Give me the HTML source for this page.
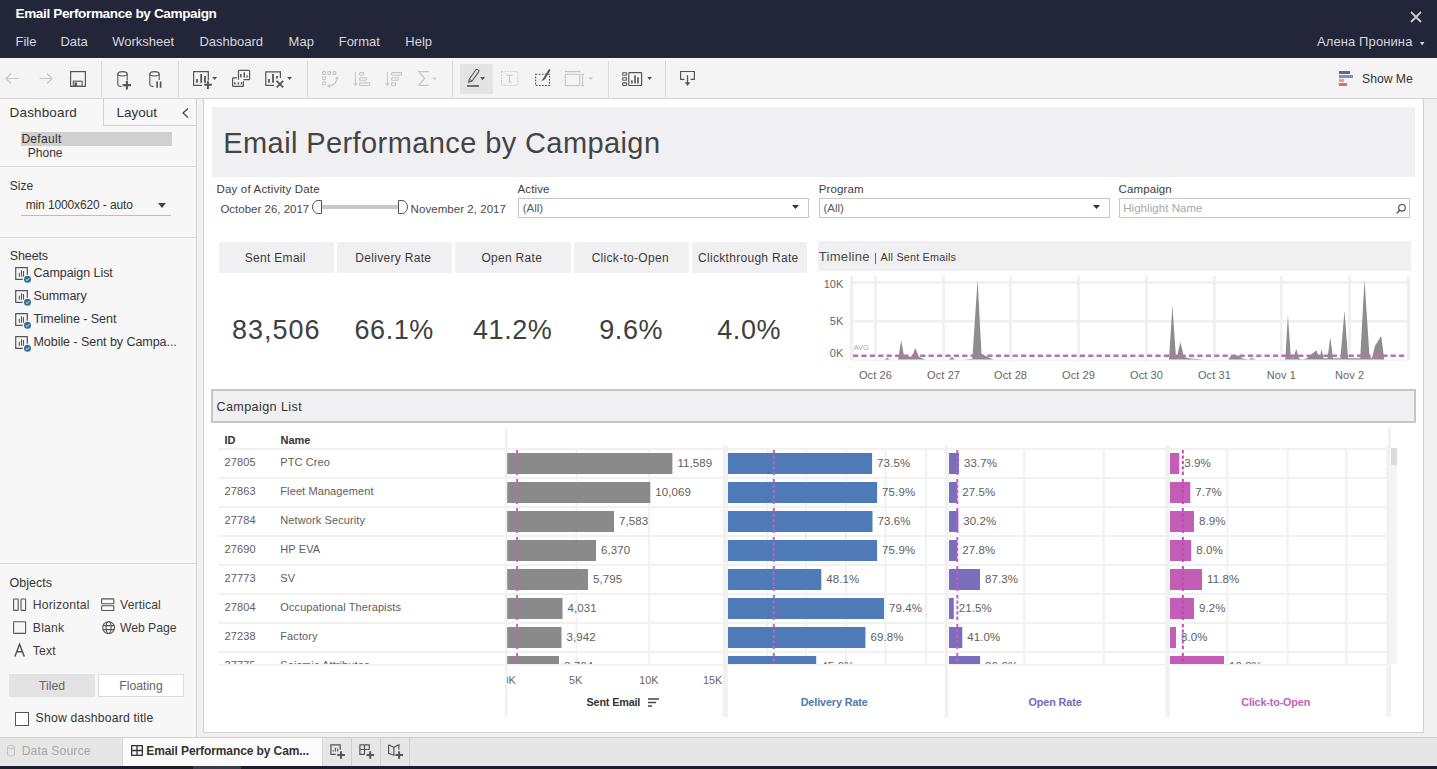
<!DOCTYPE html><html><head><meta charset="utf-8"><style>
html,body{margin:0;padding:0}
body{width:1437px;height:769px;position:relative;overflow:hidden;background:#f0f0f0;font-family:"Liberation Sans",sans-serif}
.t{position:absolute;white-space:nowrap}
.r{position:absolute}
svg.r{overflow:visible}
</style></head><body>
<div class="r" style="left:0px;top:0px;width:1437px;height:58px;background:#232538;"></div>
<div class="t" style="left:15.50px;top:7.39px;font-size:13.6px;line-height:13.6px;color:#ffffff;font-weight:700;letter-spacing:-0.39px;">Email Performance by Campaign</div>
<div class="t" style="left:15.50px;top:34.80px;font-size:13px;line-height:13px;color:#d6d7de;">File</div>
<div class="t" style="left:60.40px;top:34.80px;font-size:13px;line-height:13px;color:#d6d7de;">Data</div>
<div class="t" style="left:112.20px;top:34.80px;font-size:13px;line-height:13px;color:#d6d7de;">Worksheet</div>
<div class="t" style="left:199.40px;top:34.80px;font-size:13px;line-height:13px;color:#d6d7de;">Dashboard</div>
<div class="t" style="left:288.60px;top:34.80px;font-size:13px;line-height:13px;color:#d6d7de;">Map</div>
<div class="t" style="left:338.70px;top:34.80px;font-size:13px;line-height:13px;color:#d6d7de;">Format</div>
<div class="t" style="left:405.30px;top:34.80px;font-size:13px;line-height:13px;color:#d6d7de;">Help</div>
<div class="t" style="left:1317.00px;top:35.20px;font-size:13px;line-height:13px;color:#d6d7de;letter-spacing:0.1px;">Алена Пронина</div>
<svg class="r" style="left:1420px;top:41.5px;" width="5" height="4" viewBox="0 0 5 4"><path d="M0 0 L4.4 0 L2.2 3.6 Z" fill="#d6d7de"/></svg>
<svg class="r" style="left:1410px;top:11px;" width="12" height="12" viewBox="0 0 12 12"><path d="M1 1 L11 11 M11 1 L1 11" stroke="#c9cad2" stroke-width="1.8"/></svg>
<div class="r" style="left:0px;top:58px;width:1437px;height:40px;background:#f4f4f4;"></div>
<div class="r" style="left:0px;top:98px;width:1437px;height:1px;background:#d2d2d2;"></div>
<div class="r" style="left:101px;top:61px;width:1px;height:36px;background:#d8d8d8;"></div>
<div class="r" style="left:178px;top:61px;width:1px;height:36px;background:#d8d8d8;"></div>
<div class="r" style="left:307px;top:61px;width:1px;height:36px;background:#d8d8d8;"></div>
<div class="r" style="left:452px;top:61px;width:1px;height:36px;background:#d8d8d8;"></div>
<div class="r" style="left:608px;top:61px;width:1px;height:36px;background:#d8d8d8;"></div>
<div class="r" style="left:665px;top:61px;width:1px;height:36px;background:#d8d8d8;"></div>
<div class="r" style="left:460px;top:64px;width:33px;height:30px;background:#e4e4e4;"></div>
<svg class="r" style="left:0px;top:0px;" width="1437" height="98" viewBox="0 0 1437 98"><path d="M18.5 78.5 H6.5 M11 73.5 L6 78.5 L11 83.5" fill="none" stroke="#c6c6c6" stroke-width="1.1"/><path d="M39.5 78.5 H51.5 M47 73.5 L52 78.5 L47 83.5" fill="none" stroke="#c6c6c6" stroke-width="1.1"/><rect x="70.6" y="71.6" width="14.8" height="14.8" fill="none" stroke="#565656" stroke-width="1.2"/><rect x="73.3" y="81.2" width="8.8" height="5" fill="none" stroke="#565656" stroke-width="1.1"/><rect x="74.5" y="82.5" width="2.6" height="3.5" fill="#565656"/><ellipse cx="122.5" cy="73.8" rx="4.7" ry="2.2" fill="none" stroke="#565656" stroke-width="1.1"/><path d="M117.8 73.8 V84.5 Q118 86.2 121.5 86.6 M127.2 73.8 V80.5" fill="none" stroke="#565656" stroke-width="1.1"/><path d="M126.9 81 V89.4 M122.7 85.1 H131" stroke="#565656" stroke-width="2.1"/><ellipse cx="154.5" cy="73.8" rx="4.7" ry="2.2" fill="none" stroke="#565656" stroke-width="1.1"/><path d="M149.8 73.8 V84.5 Q150 86.2 153.5 86.6 M159.2 73.8 V80" fill="none" stroke="#565656" stroke-width="1.1"/><path d="M157.1 81.5 V87.7 M160.6 81.5 V87.7" stroke="#565656" stroke-width="1.7"/><g transform="translate(188,64)"><path d="M14 21.3 H5.6 V7.6 H20.3 V16.5" fill="none" stroke="#565656" stroke-width="1.2"/><path d="M9 18.8 V14.9 M13.2 18.8 V10 M17 18.8 V11.9" stroke="#565656" stroke-width="1.8"/><path d="M19.9 17.2 V24.9 M16.2 20.7 H23.9" stroke="#565656" stroke-width="2"/><path d="M24.1 13 H29.1 L26.6 16 Z" fill="#565656"/><path d="M50.5 15.7 V7.2 Q50.5 6.3 51.4 6.3 H60.7 Q61.6 6.3 61.6 7.2 V14.8 Q61.6 15.7 60.7 15.7 H55.5" fill="none" stroke="#565656" stroke-width="1.2"/><path d="M52.8 13.6 V10 M56.3 13.6 V8.3 M59 13.6 V11.5" stroke="#565656" stroke-width="1.5"/><path d="M49 13.8 H45.2 Q44.6 13.8 44.6 14.4 V21.8 Q44.6 22.4 45.2 22.4 H54.8 Q55.4 22.4 55.4 21.8 V17.2" fill="none" stroke="#565656" stroke-width="1.2"/><path d="M46.2 19.3 H47.6 M49.7 19.3 H51.1 M52.8 19.3 H54.2" stroke="#565656" stroke-width="2.2"/><path d="M86 21.3 H77.8 V7.9 H92.4 V14" fill="none" stroke="#565656" stroke-width="1.2"/><path d="M81 18.8 V14.9 M85 18.8 V10.1 M89 14.5 V12.1" stroke="#565656" stroke-width="1.8"/><path d="M88.6 16.8 L95.2 23.4 M95.2 16.8 L88.6 23.4" stroke="#565656" stroke-width="1.8"/><path d="M99.2 13 H104.1 L101.65 16 Z" fill="#565656"/></g><rect x="322.6" y="71.6" width="2.8" height="2.8" rx="0.5" fill="none" stroke="#c6c6c6" stroke-width="1.1"/><rect x="327.8" y="71.6" width="2.8" height="2.8" rx="0.5" fill="none" stroke="#c6c6c6" stroke-width="1.1"/><rect x="333" y="71.6" width="2.8" height="2.8" rx="0.5" fill="none" stroke="#c6c6c6" stroke-width="1.1"/><rect x="322.6" y="76.8" width="2.8" height="2.8" rx="0.5" fill="none" stroke="#c6c6c6" stroke-width="1.1"/><rect x="322.6" y="82" width="2.8" height="2.8" rx="0.5" fill="none" stroke="#c6c6c6" stroke-width="1.1"/><path d="M337 78.5 Q336 85 329 86.2" fill="none" stroke="#c6c6c6" stroke-width="1.2"/><path d="M335 78.8 L337.3 76.3 L339 79.3 Z M330 84 L327 86.3 L330 88.3 Z" fill="#c6c6c6"/><path d="M355.4 71.9 V84" stroke="#c6c6c6" stroke-width="1.1"/><path d="M353 83 H357.8 L355.4 86.2 Z" fill="#c6c6c6"/><rect x="359.6" y="72.6" width="4" height="2.6" rx="0.6" fill="none" stroke="#c6c6c6" stroke-width="1.1"/><rect x="359.6" y="77.7" width="6.8" height="2.6" rx="0.6" fill="none" stroke="#c6c6c6" stroke-width="1.1"/><rect x="359.6" y="82.9" width="10" height="2.6" rx="0.6" fill="none" stroke="#c6c6c6" stroke-width="1.1"/><path d="M387.3 71.9 V84" stroke="#c6c6c6" stroke-width="1.1"/><path d="M384.9 83 H389.7 L387.3 86.2 Z" fill="#c6c6c6"/><rect x="391.6" y="72.6" width="10" height="2.6" rx="0.6" fill="none" stroke="#c6c6c6" stroke-width="1.1"/><rect x="391.6" y="77.7" width="6.8" height="2.6" rx="0.6" fill="none" stroke="#c6c6c6" stroke-width="1.1"/><rect x="391.6" y="82.9" width="4" height="2.6" rx="0.6" fill="none" stroke="#c6c6c6" stroke-width="1.1"/><path d="M428.8 71.6 H418.8 L424.6 78.5 L418.8 85.4 H428.8" fill="none" stroke="#c6c6c6" stroke-width="1.3"/><path d="M432.6 77.5 H436.4 L434.5 79.9 Z" fill="#c6c6c6"/><path d="M468.6 82.2 L469.4 79 L476 69.8 Q476.8 69 477.8 69.6 L478.6 70.2 Q479.3 71 478.7 71.9 L472 81 Z" fill="none" stroke="#565656" stroke-width="1.1"/><path d="M469.4 79 L472 81" stroke="#565656" stroke-width="1"/><rect x="467.1" y="85.2" width="11.9" height="1.6" fill="#565656"/><path d="M480.2 76.9 H485 L482.6 80.2 Z" fill="#565656"/><rect x="501.5" y="71.6" width="16.3" height="13.8" fill="none" stroke="#c6c6c6" stroke-width="0.9" stroke-dasharray="1.6 1.2"/><path d="M506.6 75.3 H512.7 M509.65 75.3 V82 M508 82 H511.3" fill="none" stroke="#c6c6c6" stroke-width="1"/><rect x="535.6" y="74.3" width="14" height="11.2" fill="none" stroke="#565656" stroke-width="1.1" stroke-dasharray="1.8 1.3"/><path d="M549.3 70.2 L544.7 77.8" stroke="#565656" stroke-width="2" stroke-linecap="round"/><path d="M544.8 77 Q542.2 78.6 541.5 81.2 Q543.8 81 545.6 78.3 Z" fill="#565656"/><path d="M565.3 70.5 V72.5 M579.8 70.5 V72.5 M565.3 71.6 H579.8" fill="none" stroke="#c6c6c6" stroke-width="1.1"/><rect x="565.3" y="74.3" width="14.5" height="11.3" fill="none" stroke="#c6c6c6" stroke-width="1.1"/><path d="M582.6 74.2 V85.8 M581.2 74.3 H584 M581.2 85.6 H584" fill="none" stroke="#c6c6c6" stroke-width="1.1"/><path d="M588.4 77.2 H593 L590.7 80 Z" fill="#c6c6c6"/><g fill="none" stroke="#565656" stroke-width="1.1"><rect x="622.6" y="72.7" width="4" height="2.5" rx="0.6"/><rect x="622.6" y="77.7" width="4" height="2.5" rx="0.6"/><rect x="622.6" y="82.9" width="4" height="2.6" rx="0.6"/><rect x="628.8" y="72.6" width="12.8" height="12.9" rx="0.6" stroke-width="1.2"/></g><path d="M631.9 83.6 V80.2 M635 83.6 V75.2 M638 83.6 V77.2" stroke="#565656" stroke-width="1.6"/><path d="M647.2 77 H652.1 L649.65 80 Z" fill="#565656"/><path d="M684.5 79.3 H680.6 V71.5 H694.4 V79.3 H690.5" fill="none" stroke="#565656" stroke-width="1.2"/><path d="M687.5 75.2 V83" stroke="#565656" stroke-width="1.3"/><path d="M684.8 82.2 H690.3 L687.55 86 Z" fill="#565656"/></svg>
<svg class="r" style="left:1339px;top:71px;" width="14" height="15" viewBox="0 0 14 15"><rect x="0" y="0" width="11" height="3" fill="#6e6090"/><rect x="0" y="4" width="14" height="3" fill="#7497c2"/><rect x="0" y="8" width="5" height="3" fill="#eba46e"/><rect x="0" y="12" width="8" height="3" fill="#e5657a"/></svg>
<div class="t" style="left:1362.00px;top:72.97px;font-size:12.2px;line-height:12.2px;color:#333;">Show Me</div>
<div class="r" style="left:0px;top:99px;width:196px;height:638px;background:#f7f7f7;"></div>
<div class="r" style="left:196px;top:99px;width:1px;height:638px;background:#d2d2d2;"></div>
<div class="r" style="left:103px;top:99px;width:93px;height:27px;background:#f7f7f7;"></div>
<div class="r" style="left:103px;top:99px;width:1px;height:27px;background:#d2d2d2;"></div>
<div class="r" style="left:103px;top:125px;width:93px;height:1px;background:#d2d2d2;"></div>
<div class="t" style="left:9.60px;top:105.57px;font-size:13.5px;line-height:13.5px;color:#333;letter-spacing:0.15px;">Dashboard</div>
<div class="t" style="left:116.60px;top:105.57px;font-size:13.5px;line-height:13.5px;color:#333;letter-spacing:-0.05px;">Layout</div>
<svg class="r" style="left:182px;top:108px;" width="7" height="10" viewBox="0 0 7 10"><path d="M6 0.5 L1 5 L6 9.5" fill="none" stroke="#444" stroke-width="1.2"/></svg>
<div class="r" style="left:21px;top:132px;width:151px;height:14px;background:#d0d0d0;"></div>
<div class="t" style="left:21.40px;top:132.74px;font-size:12px;line-height:12px;color:#333;letter-spacing:0.3px;">Default</div>
<div class="t" style="left:27.80px;top:146.84px;font-size:12px;line-height:12px;color:#333;">Phone</div>
<div class="r" style="left:0px;top:166px;width:196px;height:1px;background:#dcdcdc;"></div>
<div class="t" style="left:9.80px;top:179.84px;font-size:12px;line-height:12px;color:#333;">Size</div>
<div class="t" style="left:25.70px;top:198.54px;font-size:12px;line-height:12px;color:#333;letter-spacing:-0.12px;">min 1000x620 - auto</div>
<svg class="r" style="left:158px;top:203px;" width="8" height="5" viewBox="0 0 8 5"><path d="M0 0 H8 L4 5 Z" fill="#444"/></svg>
<div class="r" style="left:21px;top:215px;width:150px;height:1px;background:#bdbdbd;"></div>
<div class="r" style="left:0px;top:237px;width:196px;height:1px;background:#dcdcdc;"></div>
<div class="t" style="left:9.70px;top:250.02px;font-size:12.5px;line-height:12.5px;color:#333;letter-spacing:-0.1px;">Sheets</div>
<svg class="r" style="left:0px;top:257px;" width="40" height="30" viewBox="0 0 40 30"><g transform="translate(0,-257)"><path d="M22.8 279.3 H15.7 V267.6 H27.3 V274.8" fill="none" stroke="#555" stroke-width="1.2"/><path d="M19.3 276.7 V272.8 M21.5 276.7 V270.3 M23.5 276.7 V271" stroke="#555" stroke-width="1.1"/><circle cx="27.5" cy="279.3" r="3.5" fill="#2f7096"/><path d="M25.8 279.4 L27.1 280.6 L29.3 278.2" fill="none" stroke="#e8f4fb" stroke-width="1"/></g></svg>
<div class="t" style="left:33.50px;top:267.32px;font-size:12.5px;line-height:12.5px;color:#333;letter-spacing:-0.05px;">Campaign List</div>
<svg class="r" style="left:0px;top:280px;" width="40" height="30" viewBox="0 0 40 30"><g transform="translate(0,-280)"><path d="M22.8 302.3 H15.7 V290.6 H27.3 V297.8" fill="none" stroke="#555" stroke-width="1.2"/><path d="M19.3 299.7 V295.8 M21.5 299.7 V293.3 M23.5 299.7 V294" stroke="#555" stroke-width="1.1"/><circle cx="27.5" cy="302.3" r="3.5" fill="#2f7096"/><path d="M25.8 302.4 L27.1 303.6 L29.3 301.2" fill="none" stroke="#e8f4fb" stroke-width="1"/></g></svg>
<div class="t" style="left:33.50px;top:290.32px;font-size:12.5px;line-height:12.5px;color:#333;letter-spacing:-0.05px;">Summary</div>
<svg class="r" style="left:0px;top:303px;" width="40" height="30" viewBox="0 0 40 30"><g transform="translate(0,-303)"><path d="M22.8 325.3 H15.7 V313.6 H27.3 V320.8" fill="none" stroke="#555" stroke-width="1.2"/><path d="M19.3 322.7 V318.8 M21.5 322.7 V316.3 M23.5 322.7 V317" stroke="#555" stroke-width="1.1"/><circle cx="27.5" cy="325.3" r="3.5" fill="#2f7096"/><path d="M25.8 325.4 L27.1 326.6 L29.3 324.2" fill="none" stroke="#e8f4fb" stroke-width="1"/></g></svg>
<div class="t" style="left:33.50px;top:313.32px;font-size:12.5px;line-height:12.5px;color:#333;letter-spacing:-0.05px;">Timeline - Sent</div>
<svg class="r" style="left:0px;top:326px;" width="40" height="30" viewBox="0 0 40 30"><g transform="translate(0,-326)"><path d="M22.8 348.3 H15.7 V336.6 H27.3 V343.8" fill="none" stroke="#555" stroke-width="1.2"/><path d="M19.3 345.7 V341.8 M21.5 345.7 V339.3 M23.5 345.7 V340" stroke="#555" stroke-width="1.1"/><circle cx="27.5" cy="348.3" r="3.5" fill="#2f7096"/><path d="M25.8 348.4 L27.1 349.6 L29.3 347.2" fill="none" stroke="#e8f4fb" stroke-width="1"/></g></svg>
<div class="t" style="left:33.50px;top:336.32px;font-size:12.5px;line-height:12.5px;color:#333;letter-spacing:-0.05px;">Mobile - Sent by Campa...</div>
<div class="r" style="left:0px;top:563px;width:196px;height:1px;background:#dcdcdc;"></div>
<div class="t" style="left:9.40px;top:577.42px;font-size:12.5px;line-height:12.5px;color:#333;letter-spacing:0.05px;">Objects</div>
<svg class="r" style="left:0px;top:0px;" width="200" height="769" viewBox="0 0 200 769"><g fill="none" stroke="#555" stroke-width="1.1"><rect x="13.6" y="599" width="4.6" height="11.4" rx="0.6"/><rect x="21" y="599" width="4.6" height="11.4" rx="0.6"/><rect x="101.6" y="598.9" width="12.2" height="4.8" rx="0.6"/><rect x="101.6" y="605.7" width="12.2" height="4.8" rx="0.6"/><rect x="13.6" y="621.8" width="12" height="11.6" rx="0.6"/><circle cx="108.6" cy="627.6" r="5.9"/><ellipse cx="108.6" cy="627.6" rx="2.5" ry="5.9"/><path d="M102.8 625.6 H114.4 M102.8 629.6 H114.4"/></g><path d="M14.9 656.4 L19.6 644.3 L24.3 656.4 M16.6 651.8 H22.6" fill="none" stroke="#555" stroke-width="1.5"/></svg>
<div class="t" style="left:32.80px;top:598.67px;font-size:12.2px;line-height:12.2px;color:#3d3d3d;letter-spacing:0.2px;">Horizontal</div>
<div class="t" style="left:120.10px;top:598.67px;font-size:12.2px;line-height:12.2px;color:#3d3d3d;letter-spacing:0.1px;">Vertical</div>
<div class="t" style="left:32.80px;top:621.57px;font-size:12.2px;line-height:12.2px;color:#3d3d3d;letter-spacing:0.2px;">Blank</div>
<div class="t" style="left:120.10px;top:621.57px;font-size:12.2px;line-height:12.2px;color:#3d3d3d;letter-spacing:-0.05px;">Web Page</div>
<div class="t" style="left:32.80px;top:644.67px;font-size:12.2px;line-height:12.2px;color:#3d3d3d;letter-spacing:0.2px;">Text</div>
<div class="r" style="left:9px;top:674px;width:86px;height:23px;background:#e3e3e3;"></div>
<div class="t" style="left:9.00px;top:679.67px;font-size:12.2px;line-height:12.2px;color:#666;width:86px;text-align:center;">Tiled</div>
<div class="r" style="left:98px;top:674px;width:86px;height:23px;background:#ffffff;border:1px solid #dcdcdc;box-sizing:border-box;"></div>
<div class="t" style="left:98.00px;top:679.67px;font-size:12.2px;line-height:12.2px;color:#666;width:86px;text-align:center;">Floating</div>
<svg class="r" style="left:15px;top:712px;" width="14" height="14" viewBox="0 0 14 14"><rect x="0.5" y="0.5" width="13" height="13" fill="#fff" stroke="#555"/></svg>
<div class="t" style="left:35.60px;top:712.47px;font-size:12.2px;line-height:12.2px;color:#333;letter-spacing:0.2px;">Show dashboard title</div>
<div class="r" style="left:0px;top:737px;width:1437px;height:29px;background:#e6e6e6;"></div>
<div class="r" style="left:0px;top:737px;width:1437px;height:1px;background:#d0d0d0;"></div>
<div class="r" style="left:0px;top:766px;width:1437px;height:3px;background:#1c1e2c;"></div>
<div class="r" style="left:193px;top:766px;width:48px;height:3px;background:#3a3d4c;"></div>
<svg class="r" style="left:7px;top:745px;" width="8" height="12" viewBox="0 0 8 12"><g fill="none" stroke="#c2c2c2"><ellipse cx="4" cy="2" rx="3.5" ry="1.6"/><path d="M0.5 2 V10 Q4 12.5 7.5 10 V2"/></g></svg>
<div class="t" style="left:21.70px;top:745.17px;font-size:12.2px;line-height:12.2px;color:#a8a8a8;letter-spacing:0.1px;">Data Source</div>
<div class="r" style="left:122px;top:738px;width:201px;height:28px;background:#fbfbfb;"></div>
<div class="r" style="left:122px;top:738px;width:1px;height:28px;background:#d8d8d8;"></div>
<div class="r" style="left:322px;top:738px;width:1px;height:28px;background:#d8d8d8;"></div>
<svg class="r" style="left:131px;top:745px;" width="12" height="11" viewBox="0 0 12 11"><g fill="none" stroke="#333" stroke-width="1.3"><rect x="0.65" y="0.65" width="10.7" height="9.7"/><path d="M6 0.6 V10.4 M0.6 5.5 H11.4"/></g></svg>
<div class="t" style="left:146.30px;top:744.74px;font-size:12px;line-height:12px;color:#333;font-weight:700;letter-spacing:-0.1px;">Email Performance by Cam...</div>
<div class="r" style="left:351px;top:738px;width:1px;height:28px;background:#d0d0d0;"></div>
<div class="r" style="left:380px;top:738px;width:1px;height:28px;background:#d0d0d0;"></div>
<div class="r" style="left:409px;top:738px;width:1px;height:28px;background:#d0d0d0;"></div>
<svg class="r" style="left:0px;top:700px;" width="500" height="69" viewBox="0 0 500 69"><g fill="none" stroke="#565656" stroke-width="1.2" transform="translate(0,-700)"><path d="M335.8 754.3 H330.9 V744.9 H340.2 V749.8"/><path d="M359.9 749.5 H369.2 M364.5 744.9 V754.3 M364.8 754.3 H359.9 V744.9 H369.2 V749.8"/><path d="M388.6 744.8 V753.4 L393.9 755.2 V747.4 L388.6 744.8 M393.9 747.4 L398.9 744.8 V749.8"/></g><g transform="translate(0,-700)"><path d="M333.2 751.6 V750 M335.4 751.6 V747.7 M337.7 751.6 V748.4" stroke="#565656" stroke-width="1.1"/><path d="M341 751.3 V758.8 M337.3 755 H344.9 M370.2 751.3 V758.8 M366.5 755 H374.1 M399.1 751.3 V758.8 M395.4 755 H403" stroke="#565656" stroke-width="2"/></g></svg>
<div class="r" style="left:197px;top:99px;width:6px;height:638px;background:#f2f2f2;"></div>
<div class="r" style="left:203px;top:98px;width:1221px;height:635px;background:#ffffff;border:1px solid #d0d0d0;box-sizing:border-box;"></div>
<div class="r" style="left:212px;top:107px;width:1203px;height:70px;background:#f0f0f2;"></div>
<div class="t" style="left:223.30px;top:129.05px;font-size:29px;line-height:29px;color:#444444;letter-spacing:0.4px;">Email Performance by Campaign</div>
<div class="t" style="left:216.50px;top:183.67px;font-size:11.5px;line-height:11.5px;color:#3d3d3d;letter-spacing:0.18px;">Day of Activity Date</div>
<div class="t" style="left:220.40px;top:203.97px;font-size:11.5px;line-height:11.5px;color:#4a4a4a;">October 26, 2017</div>
<div class="r" style="left:322px;top:204.8px;width:76px;height:3.8px;background:#c8c8c8;"></div>
<svg class="r" style="left:312px;top:200px;" width="10" height="14" viewBox="0 0 10 14"><path d="M9.5 0.5 H6 A5.5 6.5 0 0 0 6 13.5 H9.5 Z" fill="#fff" stroke="#555"/></svg>
<svg class="r" style="left:398px;top:200px;" width="10" height="14" viewBox="0 0 10 14"><path d="M0.5 0.5 H4 A5.5 6.5 0 0 1 4 13.5 H0.5 Z" fill="#fff" stroke="#555"/></svg>
<div class="t" style="left:410.60px;top:203.97px;font-size:11.5px;line-height:11.5px;color:#4a4a4a;letter-spacing:0.05px;">November 2, 2017</div>
<div class="t" style="left:517.60px;top:183.67px;font-size:11.5px;line-height:11.5px;color:#3d3d3d;letter-spacing:0.1px;">Active</div>
<div class="r" style="left:518px;top:198px;width:291px;height:20px;background:#fff;border:1px solid #c6c6c6;box-sizing:border-box;"></div>
<div class="t" style="left:522.70px;top:202.77px;font-size:11.5px;line-height:11.5px;color:#5a5a5a;">(All)</div>
<svg class="r" style="left:792px;top:205px;" width="7" height="4" viewBox="0 0 7 4"><path d="M0 0 H7 L3.5 4 Z" fill="#333"/></svg>
<div class="t" style="left:818.80px;top:183.67px;font-size:11.5px;line-height:11.5px;color:#3d3d3d;letter-spacing:0.1px;">Program</div>
<div class="r" style="left:819px;top:198px;width:291px;height:20px;background:#fff;border:1px solid #c6c6c6;box-sizing:border-box;"></div>
<div class="t" style="left:823.50px;top:202.77px;font-size:11.5px;line-height:11.5px;color:#5a5a5a;">(All)</div>
<svg class="r" style="left:1093px;top:205px;" width="7" height="4" viewBox="0 0 7 4"><path d="M0 0 H7 L3.5 4 Z" fill="#333"/></svg>
<div class="t" style="left:1118.60px;top:183.67px;font-size:11.5px;line-height:11.5px;color:#3d3d3d;letter-spacing:0.1px;">Campaign</div>
<div class="r" style="left:1119px;top:198px;width:291px;height:20px;background:#fff;border:1px solid #c6c6c6;box-sizing:border-box;"></div>
<div class="t" style="left:1123.20px;top:202.77px;font-size:11.5px;line-height:11.5px;color:#a8a8a8;letter-spacing:0.05px;">Highlight Name</div>
<svg class="r" style="left:1396px;top:204px;" width="10" height="10" viewBox="0 0 10 10"><circle cx="6" cy="3.8" r="3.3" fill="none" stroke="#444" stroke-width="1.1"/><path d="M3.7 6.2 L0.6 9.4" stroke="#444" stroke-width="1.3"/></svg>
<div class="r" style="left:219px;top:242px;width:115px;height:31px;background:#f0f0f2;"></div>
<div class="t" style="left:175.30px;top:251.94px;font-size:12px;line-height:12px;color:#3a3a3a;letter-spacing:0.3px;width:200px;text-align:center;">Sent Email</div>
<div class="t" style="left:176.20px;top:317.34px;font-size:27px;line-height:27px;color:#404040;letter-spacing:1.0px;width:200px;text-align:center;">83,506</div>
<div class="r" style="left:337px;top:242px;width:115px;height:31px;background:#f0f0f2;"></div>
<div class="t" style="left:293.30px;top:251.94px;font-size:12px;line-height:12px;color:#3a3a3a;letter-spacing:0.3px;width:200px;text-align:center;">Delivery Rate</div>
<div class="t" style="left:294.20px;top:317.34px;font-size:27px;line-height:27px;color:#404040;letter-spacing:0.6px;width:200px;text-align:center;">66.1%</div>
<div class="r" style="left:455px;top:242px;width:116px;height:31px;background:#f0f0f2;"></div>
<div class="t" style="left:411.80px;top:251.94px;font-size:12px;line-height:12px;color:#3a3a3a;letter-spacing:0.3px;width:200px;text-align:center;">Open Rate</div>
<div class="t" style="left:412.70px;top:317.34px;font-size:27px;line-height:27px;color:#404040;letter-spacing:0.6px;width:200px;text-align:center;">41.2%</div>
<div class="r" style="left:574px;top:242px;width:115px;height:31px;background:#f0f0f2;"></div>
<div class="t" style="left:530.30px;top:251.94px;font-size:12px;line-height:12px;color:#3a3a3a;letter-spacing:0.3px;width:200px;text-align:center;">Click-to-Open</div>
<div class="t" style="left:531.20px;top:317.34px;font-size:27px;line-height:27px;color:#404040;letter-spacing:0.6px;width:200px;text-align:center;">9.6%</div>
<div class="r" style="left:692px;top:242px;width:115px;height:31px;background:#f0f0f2;"></div>
<div class="t" style="left:648.30px;top:251.94px;font-size:12px;line-height:12px;color:#3a3a3a;letter-spacing:0.3px;width:200px;text-align:center;">Clickthrough Rate</div>
<div class="t" style="left:649.20px;top:317.34px;font-size:27px;line-height:27px;color:#404040;letter-spacing:0.6px;width:200px;text-align:center;">4.0%</div>
<div class="r" style="left:818px;top:241px;width:593px;height:30px;background:#f0f0f2;"></div>
<div class="t" style="left:818.80px;top:250.40px;font-size:13px;line-height:13px;color:#4a4a4a;letter-spacing:0.3px;">Timeline</div>
<div class="r" style="left:874.8px;top:252.5px;width:1px;height:11px;background:#666;"></div>
<div class="t" style="left:880.60px;top:251.86px;font-size:10.8px;line-height:10.8px;color:#3a3a3a;letter-spacing:0.2px;">All Sent Emails</div>
<svg class="r" style="left:0px;top:0px;pointer-events:none" width="1437" height="769" viewBox="0 0 1437 769"><rect x="850" y="276" width="3" height="84" fill="#efefef"/><rect x="1407" y="276" width="3" height="84" fill="#efefef"/><rect x="874.15" y="276" width="2.5" height="86" fill="#efefef"/><rect x="942.35" y="276" width="2.5" height="86" fill="#efefef"/><rect x="1009.35" y="276" width="2.5" height="86" fill="#efefef"/><rect x="1077.25" y="276" width="2.5" height="86" fill="#efefef"/><rect x="1145.25" y="276" width="2.5" height="86" fill="#efefef"/><rect x="1213.15" y="276" width="2.5" height="86" fill="#efefef"/><rect x="1280.15" y="276" width="2.5" height="86" fill="#efefef"/><rect x="1348.35" y="276" width="2.5" height="86" fill="#efefef"/><rect x="853" y="281.15" width="554" height="2.5" fill="#efefef"/><rect x="853" y="320.05" width="554" height="2.5" fill="#efefef"/><rect x="853" y="359.5" width="554" height="1.5" fill="#f3f3f3"/><path d="M853.0 359.6 L884.5 359.6 L887.6 357.7 L889.7 359.6 L898.1 359.6 L901.2 340.2 L904.1 356.5 L912.3 356.5 L915.2 348.1 L919.1 357.0 L925.3 359.6 L948.8 359.6 L951.9 357.1 L955.0 359.6 L963.6 359.6 L972.3 358.8 L977.6 280.1 L981.5 354.0 L993.3 359.6 L1169.0 359.6 L1172.4 305.2 L1175.8 355.0 L1177.0 356.0 L1180.5 342.0 L1183.9 357.0 L1190.7 358.5 L1204.0 359.6 L1228.3 359.6 L1231.4 355.2 L1235.0 356.2 L1238.2 355.2 L1242.5 358.4 L1248.7 359.6 L1251.2 358.0 L1255.5 359.6 L1284.8 359.6 L1285.4 358.0 L1287.9 315.1 L1290.8 356.5 L1293.5 357.7 L1296.3 349.1 L1299.0 358.3 L1302.1 359.6 L1307.0 358.3 L1316.3 350.3 L1318.8 356.5 L1320.0 356.5 L1321.6 349.1 L1323.7 358.3 L1327.5 358.3 L1330.3 337.3 L1333.0 358.3 L1340.4 358.3 L1344.5 310.8 L1348.1 358.3 L1360.2 358.3 L1364.5 280.1 L1369.5 356.5 L1372.0 358.3 L1375.0 345.9 L1381.2 336.1 L1384.3 359.6 L1407.0 359.6 Z" fill="#8d8d8d"/><line x1="853" y1="355.8" x2="1407" y2="355.8" stroke="#b472b4" stroke-width="2.6" stroke-dasharray="5.2 3.2"/></svg>
<div class="t" style="left:853.40px;top:344.47px;font-size:7.6px;line-height:7.6px;color:#cc90cc;">AVG</div>
<div class="t" style="left:803.50px;top:279.19px;font-size:11px;line-height:11px;color:#666;letter-spacing:0.1px;width:40px;text-align:right;">10K</div>
<div class="t" style="left:803.50px;top:316.49px;font-size:11px;line-height:11px;color:#666;letter-spacing:0.1px;width:40px;text-align:right;">5K</div>
<div class="t" style="left:803.50px;top:347.69px;font-size:11px;line-height:11px;color:#666;letter-spacing:0.1px;width:40px;text-align:right;">0K</div>
<div class="t" style="left:835.40px;top:369.59px;font-size:11px;line-height:11px;color:#666;letter-spacing:0.1px;width:80px;text-align:center;">Oct 26</div>
<div class="t" style="left:903.60px;top:369.59px;font-size:11px;line-height:11px;color:#666;letter-spacing:0.1px;width:80px;text-align:center;">Oct 27</div>
<div class="t" style="left:970.60px;top:369.59px;font-size:11px;line-height:11px;color:#666;letter-spacing:0.1px;width:80px;text-align:center;">Oct 28</div>
<div class="t" style="left:1038.50px;top:369.59px;font-size:11px;line-height:11px;color:#666;letter-spacing:0.1px;width:80px;text-align:center;">Oct 29</div>
<div class="t" style="left:1106.50px;top:369.59px;font-size:11px;line-height:11px;color:#666;letter-spacing:0.1px;width:80px;text-align:center;">Oct 30</div>
<div class="t" style="left:1174.40px;top:369.59px;font-size:11px;line-height:11px;color:#666;letter-spacing:0.1px;width:80px;text-align:center;">Oct 31</div>
<div class="t" style="left:1241.40px;top:369.59px;font-size:11px;line-height:11px;color:#666;letter-spacing:0.1px;width:80px;text-align:center;">Nov 1</div>
<div class="t" style="left:1309.60px;top:369.59px;font-size:11px;line-height:11px;color:#666;letter-spacing:0.1px;width:80px;text-align:center;">Nov 2</div>
<div class="r" style="left:211px;top:389px;width:1205px;height:34px;background:#f0f0f2;border:2px solid #c6c6c6;box-sizing:border-box;"></div>
<div class="t" style="left:216.40px;top:400.53px;font-size:12.6px;line-height:12.6px;color:#333;letter-spacing:0.4px;">Campaign List</div>
<div class="t" style="left:224.50px;top:434.89px;font-size:11px;line-height:11px;color:#333;font-weight:700;">ID</div>
<div class="t" style="left:280.60px;top:434.89px;font-size:11px;line-height:11px;color:#333;font-weight:700;letter-spacing:-0.1px;">Name</div>
<svg class="r" style="left:0px;top:0px;pointer-events:none" width="1437" height="769" viewBox="0 0 1437 769"><rect x="505" y="428" width="2.4" height="289" fill="#f1f1f1"/><rect x="722.8" y="445" width="5" height="272" fill="#f1f1f1"/><rect x="944.8" y="445" width="3.4" height="272" fill="#f1f1f1"/><rect x="1165.5" y="445" width="4.5" height="272" fill="#f1f1f1"/><rect x="1386.3" y="445" width="2.8" height="272" fill="#f1f1f1"/><rect x="1388" y="428" width="3" height="289" fill="#f1f1f1"/><rect x="218" y="448" width="1168" height="2" fill="#f1f1f1"/><rect x="218" y="477" width="1168" height="2" fill="#f1f1f1"/><rect x="218" y="506" width="1168" height="2" fill="#f1f1f1"/><rect x="218" y="535" width="1168" height="2" fill="#f1f1f1"/><rect x="218" y="564" width="1168" height="2" fill="#f1f1f1"/><rect x="218" y="593" width="1168" height="2" fill="#f1f1f1"/><rect x="218" y="622" width="1168" height="2" fill="#f1f1f1"/><rect x="218" y="651" width="1168" height="2" fill="#f1f1f1"/><rect x="218" y="664" width="1168" height="1.5" fill="#f1f1f1"/><rect x="575.5" y="448" width="2" height="216" fill="#f1f1f1"/><rect x="648.2" y="448" width="2" height="216" fill="#f1f1f1"/><rect x="766" y="448" width="2" height="216" fill="#f1f1f1"/><rect x="805" y="448" width="2" height="216" fill="#f1f1f1"/><rect x="845" y="448" width="2" height="216" fill="#f1f1f1"/><rect x="884.5" y="448" width="2" height="216" fill="#f1f1f1"/><rect x="925" y="448" width="2" height="216" fill="#f1f1f1"/><rect x="1023.2" y="448" width="2" height="216" fill="#f1f1f1"/><rect x="1102.8" y="448" width="2" height="216" fill="#f1f1f1"/><rect x="1226.3" y="448" width="2" height="216" fill="#f1f1f1"/><rect x="1286.6" y="448" width="2" height="216" fill="#f1f1f1"/><rect x="1345.6" y="448" width="2" height="216" fill="#f1f1f1"/></svg>
<div class="r" style="left:0;top:448px;width:1437px;height:216px;overflow:hidden">
<div class="t" style="left:224.4px;top:8.69px;font-size:11px;line-height:11px;color:#5e5e5e;letter-spacing:0.15px">27805</div>
<div class="t" style="left:280.3px;top:8.69px;font-size:11px;line-height:11px;color:#5e5e5e;letter-spacing:0.1px">PTC Creo</div>
<div class="t" style="left:677.4px;top:9.77px;font-size:11.5px;line-height:11.5px;color:#5e5e5e;letter-spacing:0.1px">11,589</div>
<div class="t" style="left:877.1px;top:9.77px;font-size:11.5px;line-height:11.5px;color:#5e5e5e;letter-spacing:0.1px">73.5%</div>
<div class="t" style="left:964.0px;top:9.77px;font-size:11.5px;line-height:11.5px;color:#5e5e5e;letter-spacing:0.1px">33.7%</div>
<div class="t" style="left:1184.3px;top:9.77px;font-size:11.5px;line-height:11.5px;color:#5e5e5e;letter-spacing:0.1px">3.9%</div>
<div class="t" style="left:224.4px;top:37.69px;font-size:11px;line-height:11px;color:#5e5e5e;letter-spacing:0.15px">27863</div>
<div class="t" style="left:280.3px;top:37.69px;font-size:11px;line-height:11px;color:#5e5e5e;letter-spacing:0.1px">Fleet Management</div>
<div class="t" style="left:655.3px;top:38.77px;font-size:11.5px;line-height:11.5px;color:#5e5e5e;letter-spacing:0.1px">10,069</div>
<div class="t" style="left:882.1px;top:38.77px;font-size:11.5px;line-height:11.5px;color:#5e5e5e;letter-spacing:0.1px">75.9%</div>
<div class="t" style="left:962.3px;top:38.77px;font-size:11.5px;line-height:11.5px;color:#5e5e5e;letter-spacing:0.1px">27.5%</div>
<div class="t" style="left:1195.3px;top:38.77px;font-size:11.5px;line-height:11.5px;color:#5e5e5e;letter-spacing:0.1px">7.7%</div>
<div class="t" style="left:224.4px;top:66.69px;font-size:11px;line-height:11px;color:#5e5e5e;letter-spacing:0.15px">27784</div>
<div class="t" style="left:280.3px;top:66.69px;font-size:11px;line-height:11px;color:#5e5e5e;letter-spacing:0.1px">Network Security</div>
<div class="t" style="left:619.0px;top:67.77px;font-size:11.5px;line-height:11.5px;color:#5e5e5e;letter-spacing:0.1px">7,583</div>
<div class="t" style="left:877.5px;top:67.77px;font-size:11.5px;line-height:11.5px;color:#5e5e5e;letter-spacing:0.1px">73.6%</div>
<div class="t" style="left:963.3px;top:67.77px;font-size:11.5px;line-height:11.5px;color:#5e5e5e;letter-spacing:0.1px">30.2%</div>
<div class="t" style="left:1199.0px;top:67.77px;font-size:11.5px;line-height:11.5px;color:#5e5e5e;letter-spacing:0.1px">8.9%</div>
<div class="t" style="left:224.4px;top:95.69px;font-size:11px;line-height:11px;color:#5e5e5e;letter-spacing:0.15px">27690</div>
<div class="t" style="left:280.3px;top:95.69px;font-size:11px;line-height:11px;color:#5e5e5e;letter-spacing:0.1px">HP EVA</div>
<div class="t" style="left:601.0px;top:96.77px;font-size:11.5px;line-height:11.5px;color:#5e5e5e;letter-spacing:0.1px">6,370</div>
<div class="t" style="left:882.1px;top:96.77px;font-size:11.5px;line-height:11.5px;color:#5e5e5e;letter-spacing:0.1px">75.9%</div>
<div class="t" style="left:962.3px;top:96.77px;font-size:11.5px;line-height:11.5px;color:#5e5e5e;letter-spacing:0.1px">27.8%</div>
<div class="t" style="left:1196.2px;top:96.77px;font-size:11.5px;line-height:11.5px;color:#5e5e5e;letter-spacing:0.1px">8.0%</div>
<div class="t" style="left:224.4px;top:124.69px;font-size:11px;line-height:11px;color:#5e5e5e;letter-spacing:0.15px">27773</div>
<div class="t" style="left:280.3px;top:124.69px;font-size:11px;line-height:11px;color:#5e5e5e;letter-spacing:0.1px">SV</div>
<div class="t" style="left:593.0px;top:125.77px;font-size:11.5px;line-height:11.5px;color:#5e5e5e;letter-spacing:0.1px">5,795</div>
<div class="t" style="left:826.3px;top:125.77px;font-size:11.5px;line-height:11.5px;color:#5e5e5e;letter-spacing:0.1px">48.1%</div>
<div class="t" style="left:985.0px;top:125.77px;font-size:11.5px;line-height:11.5px;color:#5e5e5e;letter-spacing:0.1px">87.3%</div>
<div class="t" style="left:1207.0px;top:125.77px;font-size:11.5px;line-height:11.5px;color:#5e5e5e;letter-spacing:0.1px">11.8%</div>
<div class="t" style="left:224.4px;top:153.69px;font-size:11px;line-height:11px;color:#5e5e5e;letter-spacing:0.15px">27804</div>
<div class="t" style="left:280.3px;top:153.69px;font-size:11px;line-height:11px;color:#5e5e5e;letter-spacing:0.1px">Occupational Therapists</div>
<div class="t" style="left:567.5px;top:154.77px;font-size:11.5px;line-height:11.5px;color:#5e5e5e;letter-spacing:0.1px">4,031</div>
<div class="t" style="left:889.0px;top:154.77px;font-size:11.5px;line-height:11.5px;color:#5e5e5e;letter-spacing:0.1px">79.4%</div>
<div class="t" style="left:958.8px;top:154.77px;font-size:11.5px;line-height:11.5px;color:#5e5e5e;letter-spacing:0.1px">21.5%</div>
<div class="t" style="left:1199.0px;top:154.77px;font-size:11.5px;line-height:11.5px;color:#5e5e5e;letter-spacing:0.1px">9.2%</div>
<div class="t" style="left:224.4px;top:182.69px;font-size:11px;line-height:11px;color:#5e5e5e;letter-spacing:0.15px">27238</div>
<div class="t" style="left:280.3px;top:182.69px;font-size:11px;line-height:11px;color:#5e5e5e;letter-spacing:0.1px">Factory</div>
<div class="t" style="left:566.5px;top:183.77px;font-size:11.5px;line-height:11.5px;color:#5e5e5e;letter-spacing:0.1px">3,942</div>
<div class="t" style="left:870.4px;top:183.77px;font-size:11.5px;line-height:11.5px;color:#5e5e5e;letter-spacing:0.1px">69.8%</div>
<div class="t" style="left:967.3px;top:183.77px;font-size:11.5px;line-height:11.5px;color:#5e5e5e;letter-spacing:0.1px">41.0%</div>
<div class="t" style="left:1181.0px;top:183.77px;font-size:11.5px;line-height:11.5px;color:#5e5e5e;letter-spacing:0.1px">3.0%</div>
<div class="t" style="left:224.4px;top:211.69px;font-size:11px;line-height:11px;color:#5e5e5e;letter-spacing:0.15px">27775</div>
<div class="t" style="left:280.3px;top:211.69px;font-size:11px;line-height:11px;color:#5e5e5e;letter-spacing:0.1px">Seismic Attributes</div>
<div class="t" style="left:564.0px;top:212.77px;font-size:11.5px;line-height:11.5px;color:#5e5e5e;letter-spacing:0.1px">3,764</div>
<div class="t" style="left:821.2px;top:212.77px;font-size:11.5px;line-height:11.5px;color:#5e5e5e;letter-spacing:0.1px">45.6%</div>
<div class="t" style="left:985.1px;top:212.77px;font-size:11.5px;line-height:11.5px;color:#5e5e5e;letter-spacing:0.1px">86.9%</div>
<div class="t" style="left:1229.0px;top:212.77px;font-size:11.5px;line-height:11.5px;color:#5e5e5e;letter-spacing:0.1px">10.8%</div>
<svg class="r" style="left:0;top:0" width="1437" height="216"><rect x="507.2" y="5" width="165.2" height="21" fill="#8a8a8a"/><rect x="728" y="5" width="144.1" height="21" fill="#4e7bb8"/><rect x="949" y="5" width="10.0" height="21" fill="#7a6dbc"/><rect x="1170" y="5" width="9.3" height="21" fill="#c45db6"/><rect x="507.2" y="34" width="143.1" height="21" fill="#8a8a8a"/><rect x="728" y="34" width="149.1" height="21" fill="#4e7bb8"/><rect x="949" y="34" width="8.3" height="21" fill="#7a6dbc"/><rect x="1170" y="34" width="20.3" height="21" fill="#c45db6"/><rect x="507.2" y="63" width="106.8" height="21" fill="#8a8a8a"/><rect x="728" y="63" width="144.5" height="21" fill="#4e7bb8"/><rect x="949" y="63" width="9.3" height="21" fill="#7a6dbc"/><rect x="1170" y="63" width="24.0" height="21" fill="#c45db6"/><rect x="507.2" y="92" width="88.8" height="21" fill="#8a8a8a"/><rect x="728" y="92" width="149.1" height="21" fill="#4e7bb8"/><rect x="949" y="92" width="8.3" height="21" fill="#7a6dbc"/><rect x="1170" y="92" width="21.2" height="21" fill="#c45db6"/><rect x="507.2" y="121" width="80.8" height="21" fill="#8a8a8a"/><rect x="728" y="121" width="93.3" height="21" fill="#4e7bb8"/><rect x="949" y="121" width="31.0" height="21" fill="#7a6dbc"/><rect x="1170" y="121" width="32.0" height="21" fill="#c45db6"/><rect x="507.2" y="150" width="55.3" height="21" fill="#8a8a8a"/><rect x="728" y="150" width="156.0" height="21" fill="#4e7bb8"/><rect x="949" y="150" width="4.8" height="21" fill="#7a6dbc"/><rect x="1170" y="150" width="24.0" height="21" fill="#c45db6"/><rect x="507.2" y="179" width="54.3" height="21" fill="#8a8a8a"/><rect x="728" y="179" width="137.4" height="21" fill="#4e7bb8"/><rect x="949" y="179" width="13.3" height="21" fill="#7a6dbc"/><rect x="1170" y="179" width="6.0" height="21" fill="#c45db6"/><rect x="507.2" y="208" width="51.8" height="21" fill="#8a8a8a"/><rect x="728" y="208" width="88.2" height="21" fill="#4e7bb8"/><rect x="949" y="208" width="31.1" height="21" fill="#7a6dbc"/><rect x="1170" y="208" width="54.0" height="21" fill="#c45db6"/><line x1="517.1" y1="2" x2="517.1" y2="28.5" stroke="#c564c5" stroke-width="2" stroke-dasharray="3.4 2"/><line x1="517.1" y1="31" x2="517.1" y2="57.5" stroke="#c564c5" stroke-width="2" stroke-dasharray="3.4 2"/><line x1="517.1" y1="60" x2="517.1" y2="86.5" stroke="#c564c5" stroke-width="2" stroke-dasharray="3.4 2"/><line x1="517.1" y1="89" x2="517.1" y2="115.5" stroke="#c564c5" stroke-width="2" stroke-dasharray="3.4 2"/><line x1="517.1" y1="118" x2="517.1" y2="144.5" stroke="#c564c5" stroke-width="2" stroke-dasharray="3.4 2"/><line x1="517.1" y1="147" x2="517.1" y2="173.5" stroke="#c564c5" stroke-width="2" stroke-dasharray="3.4 2"/><line x1="517.1" y1="176" x2="517.1" y2="202.5" stroke="#c564c5" stroke-width="2" stroke-dasharray="3.4 2"/><line x1="517.1" y1="205" x2="517.1" y2="231.5" stroke="#c564c5" stroke-width="2" stroke-dasharray="3.4 2"/><line x1="773.8" y1="2" x2="773.8" y2="28.5" stroke="#c060c0" stroke-width="2" stroke-dasharray="3.4 2"/><line x1="773.8" y1="31" x2="773.8" y2="57.5" stroke="#c060c0" stroke-width="2" stroke-dasharray="3.4 2"/><line x1="773.8" y1="60" x2="773.8" y2="86.5" stroke="#c060c0" stroke-width="2" stroke-dasharray="3.4 2"/><line x1="773.8" y1="89" x2="773.8" y2="115.5" stroke="#c060c0" stroke-width="2" stroke-dasharray="3.4 2"/><line x1="773.8" y1="118" x2="773.8" y2="144.5" stroke="#c060c0" stroke-width="2" stroke-dasharray="3.4 2"/><line x1="773.8" y1="147" x2="773.8" y2="173.5" stroke="#c060c0" stroke-width="2" stroke-dasharray="3.4 2"/><line x1="773.8" y1="176" x2="773.8" y2="202.5" stroke="#c060c0" stroke-width="2" stroke-dasharray="3.4 2"/><line x1="773.8" y1="205" x2="773.8" y2="231.5" stroke="#c060c0" stroke-width="2" stroke-dasharray="3.4 2"/><line x1="957.3" y1="2" x2="957.3" y2="28.5" stroke="#c060c0" stroke-width="2" stroke-dasharray="3.4 2"/><line x1="957.3" y1="31" x2="957.3" y2="57.5" stroke="#c060c0" stroke-width="2" stroke-dasharray="3.4 2"/><line x1="957.3" y1="60" x2="957.3" y2="86.5" stroke="#c060c0" stroke-width="2" stroke-dasharray="3.4 2"/><line x1="957.3" y1="89" x2="957.3" y2="115.5" stroke="#c060c0" stroke-width="2" stroke-dasharray="3.4 2"/><line x1="957.3" y1="118" x2="957.3" y2="144.5" stroke="#c060c0" stroke-width="2" stroke-dasharray="3.4 2"/><line x1="957.3" y1="147" x2="957.3" y2="173.5" stroke="#c060c0" stroke-width="2" stroke-dasharray="3.4 2"/><line x1="957.3" y1="176" x2="957.3" y2="202.5" stroke="#c060c0" stroke-width="2" stroke-dasharray="3.4 2"/><line x1="957.3" y1="205" x2="957.3" y2="231.5" stroke="#c060c0" stroke-width="2" stroke-dasharray="3.4 2"/><line x1="1182.8" y1="2" x2="1182.8" y2="28.5" stroke="#b94fb2" stroke-width="2" stroke-dasharray="3.4 2"/><line x1="1182.8" y1="31" x2="1182.8" y2="57.5" stroke="#b94fb2" stroke-width="2" stroke-dasharray="3.4 2"/><line x1="1182.8" y1="60" x2="1182.8" y2="86.5" stroke="#b94fb2" stroke-width="2" stroke-dasharray="3.4 2"/><line x1="1182.8" y1="89" x2="1182.8" y2="115.5" stroke="#b94fb2" stroke-width="2" stroke-dasharray="3.4 2"/><line x1="1182.8" y1="118" x2="1182.8" y2="144.5" stroke="#b94fb2" stroke-width="2" stroke-dasharray="3.4 2"/><line x1="1182.8" y1="147" x2="1182.8" y2="173.5" stroke="#b94fb2" stroke-width="2" stroke-dasharray="3.4 2"/><line x1="1182.8" y1="176" x2="1182.8" y2="202.5" stroke="#b94fb2" stroke-width="2" stroke-dasharray="3.4 2"/><line x1="1182.8" y1="205" x2="1182.8" y2="231.5" stroke="#b94fb2" stroke-width="2" stroke-dasharray="3.4 2"/></svg>
</div>
<div class="r" style="left:1389px;top:448px;width:8px;height:216px;background:#f4f4f4;"></div>
<div class="r" style="left:1391px;top:448px;width:6px;height:17px;background:#dcdcdc;"></div>
<div class="r" style="left:507px;top:665px;width:216px;height:30px;overflow:hidden">
<div class="t" style="left:-28.0px;top:9.56px;width:60px;text-align:center;font-size:10.8px;line-height:10.8px;color:#666">0K</div>
<div class="t" style="left:38.5px;top:9.56px;width:60px;text-align:center;font-size:10.8px;line-height:10.8px;color:#666">5K</div>
<div class="t" style="left:111.9px;top:9.56px;width:60px;text-align:center;font-size:10.8px;line-height:10.8px;color:#666">10K</div>
<div class="t" style="left:175.7px;top:9.56px;width:60px;text-align:center;font-size:10.8px;line-height:10.8px;color:#666">15K</div>
</div>
<div class="t" style="left:586.50px;top:696.76px;font-size:10.8px;line-height:10.8px;color:#333;font-weight:700;letter-spacing:-0.15px;">Sent Email</div>
<svg class="r" style="left:648px;top:698px;" width="12" height="10" viewBox="0 0 12 10"><path d="M0 1 H11 M0 4.5 H8 M0 8 H4" stroke="#444" stroke-width="1.6"/></svg>
<div class="t" style="left:774.20px;top:696.76px;font-size:10.8px;line-height:10.8px;color:#4e79b0;font-weight:700;letter-spacing:-0.1px;width:120px;text-align:center;">Delivery Rate</div>
<div class="t" style="left:995.10px;top:696.76px;font-size:10.8px;line-height:10.8px;color:#7768b8;font-weight:700;letter-spacing:-0.1px;width:120px;text-align:center;">Open Rate</div>
<div class="t" style="left:1215.70px;top:696.76px;font-size:10.8px;line-height:10.8px;color:#c062b8;font-weight:700;letter-spacing:-0.15px;width:120px;text-align:center;">Click-to-Open</div>
</body></html>
